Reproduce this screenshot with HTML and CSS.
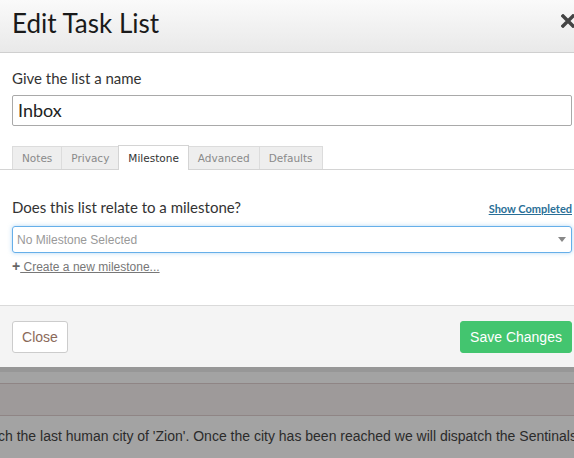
FILE: index.html
```html
<!DOCTYPE html>
<html>
<head>
<meta charset="utf-8">
<link rel="stylesheet" href="styles.css">
</head>
<body>
<div class="modal">
  <div class="modal-header">
    <h1 class="modal-title">Edit Task List</h1>
    <svg class="close-x" width="14" height="14" viewBox="0 0 14 14"><path d="M2 2 L12 12 M12 2 L2 12" stroke="#444" stroke-width="3.4" stroke-linecap="square"/></svg>
  </div>
  <div class="modal-body">
    <label class="field-label">Give the list a name</label>
    <div class="text-input">Inbox</div>
    <ul class="tabs">
      <li class="tab">Notes</li>
      <li class="tab">Privacy</li>
      <li class="tab active">Milestone</li>
      <li class="tab">Advanced</li>
      <li class="tab">Defaults</li>
    </ul>
    <div class="question-row">
      <span class="question">Does this list relate to a milestone?</span>
      <a class="show-completed">Show Completed</a>
    </div>
    <div class="select">
      <span class="placeholder">No Milestone Selected</span>
      <span class="caret"></span>
    </div>
    <div class="create-row">
      <span class="plus">+</span><a class="create-link"> Create a new milestone...</a>
    </div>
  </div>
  <div class="modal-footer">
    <button class="btn btn-close">Close</button>
    <button class="btn btn-save">Save Changes</button>
  </div>
</div>
<div class="shadow-band"></div>
<div class="page">
  <div class="page-bar"></div>
  <p class="page-text">ch the last human city of 'Zion'. Once the city has been reached we will dispatch the Sentinals</p>
</div>
</body>
</html>
```

FILE: styles.css
```css
html, body {
  margin: 0;
  padding: 0;
}
body {
  width: 574px;
  height: 458px;
  overflow: hidden;
  background: #a3a3a3;
  font-family: "Lato", "Open Sans", sans-serif;
  color: #333;
}
.modal {
  width: 584px;
  background: #fff;
}
.modal-header {
  height: 53px;
  box-sizing: border-box;
  border-bottom: 1px solid #cfcfcf;
  background: linear-gradient(#fafafa, #e9e9e9);
  padding: 0 12px;
  display: flex;
  align-items: center;
  justify-content: space-between;
}
.modal-title {
  margin: 0;
  font-weight: 400;
  font-size: 26px;
  color: #1a1a1a;
  margin-top: -6px;
}
.close-x {
  display: block;
  margin-right: -3px;
  margin-top: -11px;
}
.modal-body {
  padding: 15px 12px 0;
  height: 252px;
  box-sizing: border-box;
}
.field-label {
  display: block;
  font-size: 15px;
  line-height: 20px;
  color: #333;
}
.text-input {
  margin-top: 7px;
  height: 31px;
  box-sizing: border-box;
  border: 1px solid #a9a9a9;
  border-radius: 2px;
  padding: 0 5px;
  font-size: 18px;
  line-height: 29px;
  color: #222;
}
.tabs {
  list-style: none;
  margin: 20px -12px 0;
  padding: 0 0 0 12px;
  display: flex;
  align-items: flex-end;
  border-bottom: 1px solid #d4d4d4;
  height: 24px;
  box-sizing: border-box;
}
.tab {
  font-family: "DejaVu Sans", Verdana, sans-serif;
  font-size: 10.5px;
  color: #8a8a8a;
  background: #eeeeee;
  border: 1px solid #dcdcdc;
  border-bottom: none;
  height: 23px;
  box-sizing: border-box;
  line-height: 22px;
  padding: 0 9px;
  margin-right: -1px;
}
.tab.active {
  background: #fff;
  color: #333;
  height: 25px;
  margin-bottom: -1px;
  line-height: 24px;
  border-color: #d4d4d4;
  position: relative;
  z-index: 1;
}
.question-row {
  margin-top: 28px;
  display: flex;
  justify-content: space-between;
  align-items: baseline;
  height: 20px;
}
.question {
  font-size: 15px;
  color: #333;
}
.show-completed {
  font-size: 11px;
  font-weight: bold;
  color: #2a6f97;
  text-decoration: underline;
}
.select {
  margin-top: 8px;
  height: 27px;
  box-sizing: border-box;
  border: 1px solid #66afe9;
  border-radius: 3px;
  box-shadow: 0 0 4px rgba(102, 175, 233, 0.5);
  display: flex;
  align-items: center;
  justify-content: space-between;
  padding: 0 5px 0 4px;
}
.placeholder {
  font-family: "Liberation Sans", Arial, sans-serif;
  font-size: 12px;
  color: #999;
}
.caret {
  width: 0;
  height: 0;
  border-left: 4px solid transparent;
  border-right: 4px solid transparent;
  border-top: 5px solid #888;
}
.create-row {
  margin-top: 5px;
  font-family: "Liberation Sans", Arial, sans-serif;
  font-size: 12px;
  color: #777;
  line-height: 16px;
}
.plus {
  font-weight: bold;
  font-size: 14px;
  color: #666;
}
.create-link {
  text-decoration: underline;
  color: #777;
}
.modal-footer {
  border-top: 1px solid #dadada;
  background: #f4f4f4;
  height: 62px;
  box-sizing: border-box;
  padding: 15px 12px 0;
  display: flex;
  justify-content: space-between;
  align-items: flex-start;
}
.btn {
  font-family: "Liberation Sans", Arial, sans-serif;
  font-size: 14px;
  height: 32px;
  border-radius: 3px;
  padding: 0;
  white-space: nowrap;
  cursor: pointer;
}
.btn-close {
  background: #fff;
  border: 1px solid #cccccc;
  color: #8b6a5a;
  width: 56px;
}
.btn-save {
  background: #43c56f;
  border: 1px solid #43c56f;
  color: #fff;
  width: 112px;
}
.shadow-band {
  height: 5px;
  background: #979797;
}
.page-bar {
  margin-top: 11px;
  height: 31px;
  border-top: 1px solid #8f8585;
  border-bottom: 1px solid #8f8585;
  background: #9e9a9a;
}
.page-text {
  margin: 0;
  margin-top: 12px;
  margin-left: -2px;
  white-space: nowrap;
  font-family: "Liberation Sans", Arial, sans-serif;
  font-size: 14px;
  color: #2b2b2b;
}
```
